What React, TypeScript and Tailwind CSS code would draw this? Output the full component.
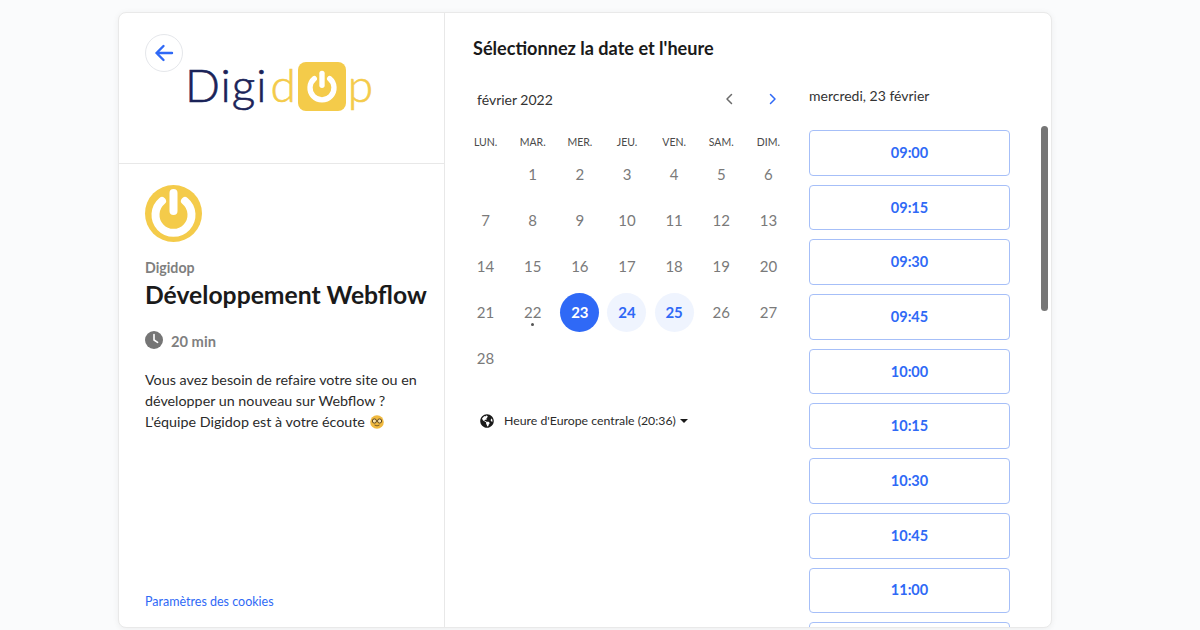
import { FC } from 'react'
import { FaGlobeAmericas } from 'react-icons/fa'

const weekDays = ['LUN.', 'MAR.', 'MER.', 'JEU.', 'VEN.', 'SAM.', 'DIM.']
const slots = ['09:00', '09:15', '09:30', '09:45', '10:00', '10:15', '10:30', '10:45', '11:00']
const days: (number | null)[] = [null, ...Array.from({ length: 28 }, (_, i) => i + 1)]

const PowerGlyph: FC<{ className: string }> = ({ className }) => (
  <svg viewBox="0 0 57 57" className={className}>
    <path d="M17 16 A18 18 0 1 0 40 16" fill="none" stroke="#ffffff" strokeWidth="8" strokeLinecap="round" />
    <line x1="28.5" y1="8" x2="28.5" y2="26" stroke="#ffffff" strokeWidth="8" strokeLinecap="round" />
  </svg>
)

const Logo: FC = () => (
  <div className="flex items-start h-[56px] text-[46px] leading-[48px] font-light">
    <span className="text-[#1a2358] tracking-[1px] [-webkit-text-stroke:0.6px_#1a2358]">Digi</span>
    <span className="text-[#f4cb4a] ml-[3px] [-webkit-text-stroke:0.6px_#f4cb4a]">d</span>
    <div className="w-[48px] h-[49px] mt-[1px] ml-[2px] mr-[2px] rounded-[8px] bg-[#f4cb4a] flex items-center justify-center">
      <PowerGlyph className="w-[38px] h-[38px]" />
    </div>
    <span className="text-[#f4cb4a] [-webkit-text-stroke:0.6px_#f4cb4a]">p</span>
  </div>
)

const Nerd: FC = () => (
  <svg viewBox="0 0 14 14" className="inline-block w-[14px] h-[14px] align-[-2px] ml-[1px]">
    <circle cx="7" cy="7" r="6.8" fill="#f0b93f" />
    <circle cx="4.4" cy="6" r="2.1" fill="#f8e2a8" stroke="#5f4720" strokeWidth="1" />
    <circle cx="9.6" cy="6" r="2.1" fill="#f8e2a8" stroke="#5f4720" strokeWidth="1" />
    <path d="M4.5 10 Q7 11.8 9.5 10" stroke="#7a5a24" strokeWidth="1" fill="none" />
  </svg>
)

const Day: FC<{ day: number | null }> = ({ day }) => {
  if (day === null) return <div />
  const base = 'w-[39px] h-[39px] rounded-full flex items-center justify-center text-[15px]'
  return (
    <div className="h-[46px] flex items-center justify-center relative">
      {day === 23 ? (
        <div className={`${base} bg-[#2f69f6] text-white font-bold`}>{day}</div>
      ) : day === 24 || day === 25 ? (
        <div className={`${base} bg-[#eff4fe] text-[#2f69f6] font-bold`}>{day}</div>
      ) : (
        <div className={`${base} text-[#7a7a7a]`}>{day}</div>
      )}
      {day === 22 && <span className="absolute left-1/2 top-[34px] -ml-[1.5px] w-[3px] h-[3px] rounded-full bg-[#555]" />}
    </div>
  )
}

export default function App() {
  return (
    <div className="w-[1200px] h-[630px] overflow-hidden bg-[#fafbfc] pt-3 pl-[118px] font-['Lato','Liberation_Sans',sans-serif]">
      <div className="w-[934px] h-[616px] bg-white rounded-[8px] border border-[#e9e9e9] shadow-[0_1px_6px_rgba(0,0,0,0.06)] flex overflow-hidden relative">
        <aside className="w-[326px] shrink-0 border-r border-[#e8e8e8] flex flex-col">
          <div className="h-[151px] shrink-0 border-b border-[#e8e8e8] pt-[48px] pl-[66px] relative">
            <button className="absolute left-[26px] top-[21px] w-[38px] h-[38px] rounded-full border border-[#e5e7eb] bg-white flex items-center justify-center">
              <svg viewBox="0 0 20 20" className="w-[20px] h-[20px]" fill="none" stroke="#2f69f6" strokeWidth="2.4" strokeLinecap="round" strokeLinejoin="round">
                <path d="M18 10H2.5M9.5 3 2.5 10l7 7" />
              </svg>
            </button>
            <Logo />
          </div>
          <div className="flex-1 px-[26px] pt-[21px] pb-[17px] flex flex-col">
            <div className="w-[57px] h-[57px] rounded-full bg-[#f4cb4a]">
              <PowerGlyph className="w-[57px] h-[57px]" />
            </div>
            <div className="mt-[16px] text-[14.2px] leading-[20px] font-bold text-[#7f7f7f]">Digidop</div>
            <h1 className="mt-[1px] text-[24.7px] leading-[32px] font-bold text-[#1a1a1a] whitespace-nowrap">Développement Webflow</h1>
            <div className="mt-[17px] flex items-center gap-[8px] text-[14.7px] font-bold text-[#7f7f7f]">
              <svg viewBox="0 0 18 18" className="w-[18px] h-[18px]">
                <circle cx="9" cy="9" r="9" fill="#757575" />
                <path d="M9 3.5V9l3.6 2.4" fill="none" stroke="#fff" strokeWidth="1.6" strokeLinecap="round" strokeLinejoin="round" />
              </svg>
              <span className="mt-[2px]">20 min</span>
            </div>
            <p className="mt-[17px] text-[14.3px] leading-[21px] text-[#2b2b2b] whitespace-nowrap">
              Vous avez besoin de refaire votre site ou en<br />
              développer un nouveau sur Webflow ?<br />
              L'équipe Digidop est à votre écoute <Nerd />
            </p>
            <a className="mt-auto text-[12.5px] leading-[16px] text-[#2f69f6]">Paramètres des cookies</a>
          </div>
        </aside>

        <main className="flex-1 pl-[16px] pt-[24px] flex relative">
          <div className="w-[331px] shrink-0">
            <h2 className="pl-[12px] text-[18.1px] leading-[22px] font-bold text-[#1a1a1a]">Sélectionnez la date et l'heure</h2>
            <div className="mt-[28px] h-[24px] pl-[16px] pr-[12px] flex items-center justify-between">
              <span className="text-[14px] text-[#333]">février 2022</span>
              <div className="flex items-center gap-[30px]">
                <svg viewBox="0 0 14 14" className="w-[14px] h-[14px]" fill="none" stroke="#6b6b6b" strokeWidth="1.5" strokeLinecap="round" strokeLinejoin="round"><path d="M9.5 2.5 5 7l4.5 4.5" /></svg>
                <svg viewBox="0 0 14 14" className="w-[14px] h-[14px]" fill="none" stroke="#2f69f6" strokeWidth="1.5" strokeLinecap="round" strokeLinejoin="round"><path d="M4.5 2.5 9 7l-4.5 4.5" /></svg>
              </div>
            </div>
            <div className="mt-[24px] ml-[1px] w-[330px] grid grid-cols-7 text-center text-[10.5px] leading-[14px] text-[#4a4a4a]">
              {weekDays.map((d) => <div key={d}>{d}</div>)}
            </div>
            <div className="mt-[2px] ml-[1px] w-[330px] grid grid-cols-7">
              {days.map((d, i) => <Day key={i} day={d} />)}
            </div>
            <div className="mt-[31px] pl-[19px] flex items-center text-[12.3px] leading-[18px] text-[#2b2b2b]">
              <FaGlobeAmericas className="w-[14px] h-[14px] text-[#1a1a1a]" />
              <span className="ml-[10px]">Heure d'Europe centrale (20:36)</span>
              <span className="ml-[4px] w-0 h-0 border-x-[4px] border-x-transparent border-t-[4px] border-t-[#1a1a1a]" />
            </div>
          </div>
          <div className="ml-[17px] w-[201px] pt-[49px]">
            <div className="text-[14px] leading-[20px] text-[#333]">mercredi, 23 février</div>
            <div className="mt-[24px] flex flex-col gap-[9px]">
              {slots.map((s) => (
                <div key={s} className="h-[45.7px] shrink-0 rounded-[4px] border border-[#a6bff8] flex items-center justify-center text-[14.5px] font-bold text-[#2f69f6]">{s}</div>
              ))}
              <div className="h-[45.7px] shrink-0 rounded-[4px] border border-[#a6bff8]" />
            </div>
          </div>
          <div className="absolute left-[596px] top-[113px] w-[7px] h-[185px] rounded-full bg-[#767676]" />
        </main>
      </div>
    </div>
  )
}
